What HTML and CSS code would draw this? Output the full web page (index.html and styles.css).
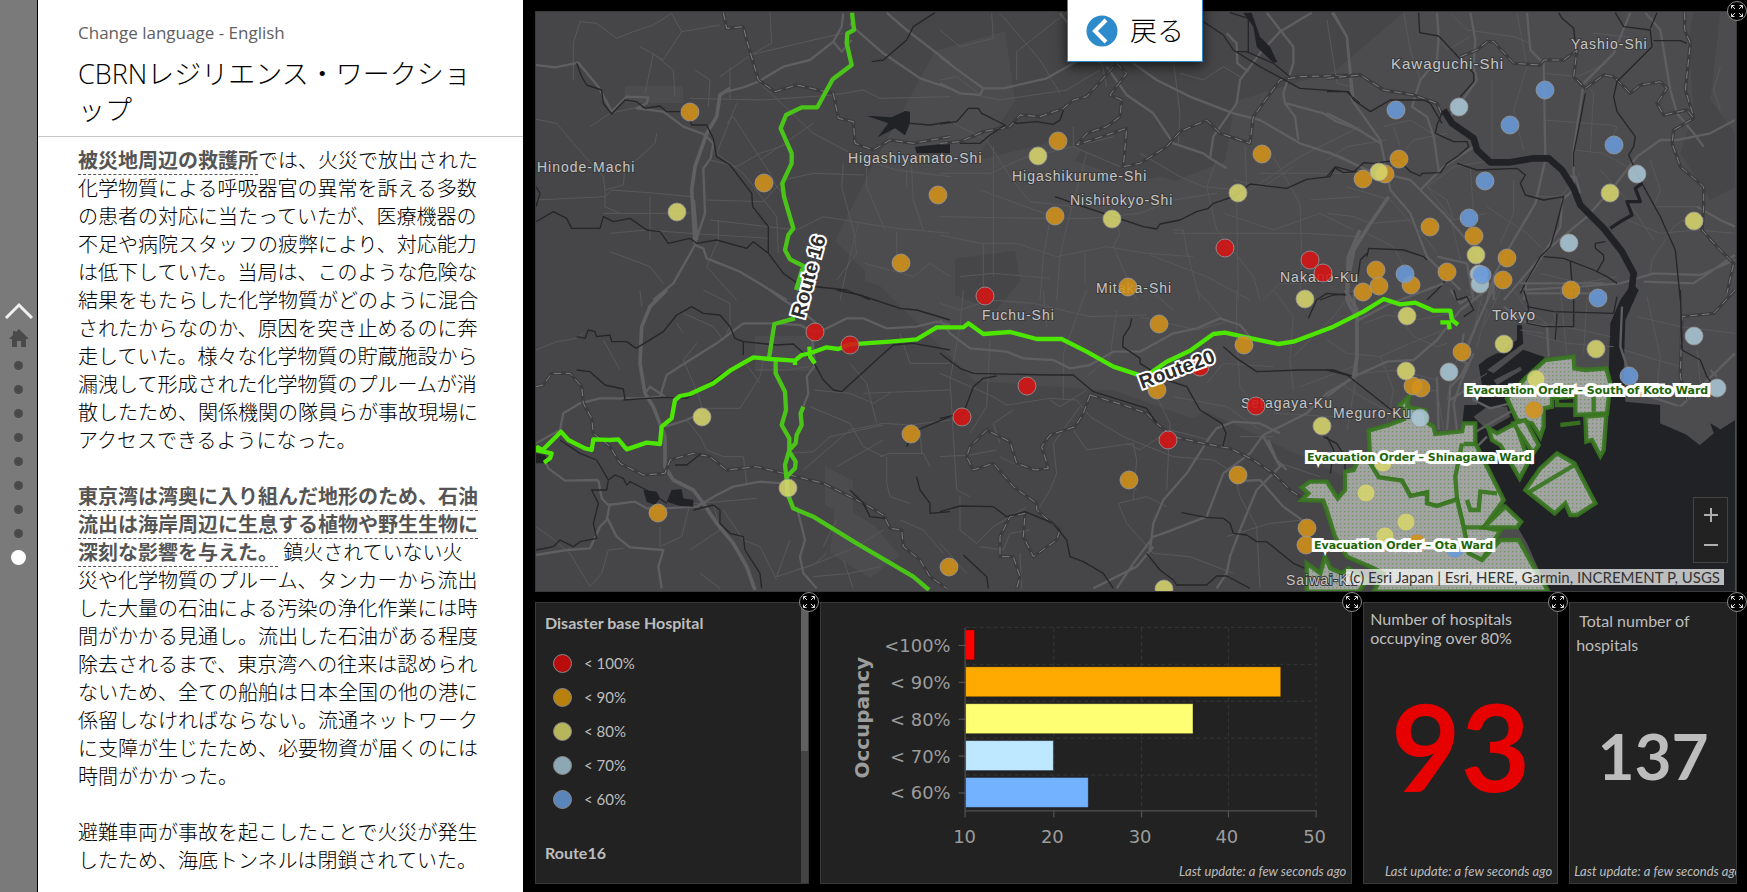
FILE: index.html
```html
<!DOCTYPE html>
<html lang="ja">
<head>
<meta charset="utf-8">
<title>CBRNレジリエンス・ワークショップ</title>
<link rel="stylesheet" href="styles.css">
</head>
<body>
<nav class="rail" aria-label="Sections">
  <button class="rail-up" aria-label="Previous section"><svg width="30" height="18" viewBox="0 0 30 18"><path d="M2 16 15 3l13 13" fill="none" stroke="#f0f0f0" stroke-width="3"/></svg></button>
  <button class="rail-home" aria-label="Home"><svg width="20" height="18" viewBox="0 0 20 18"><path d="M10 0 6.500 3.500V2H4v4L0 10h3v8h5v-6h4v6h5v-8h3z" fill="#4a4a4a"/></svg></button>
  <button class="dot" aria-label="Section 1"></button>
  <button class="dot" aria-label="Section 2"></button>
  <button class="dot" aria-label="Section 3"></button>
  <button class="dot" aria-label="Section 4"></button>
  <button class="dot" aria-label="Section 5"></button>
  <button class="dot" aria-label="Section 6"></button>
  <button class="dot" aria-label="Section 7"></button>
  <button class="dot" aria-label="Section 8"></button>
  <button class="dot active" aria-label="Section 9" aria-current="true"></button>
</nav>

<article class="story">
  <header class="story-head">
    <a class="lang" href="#en">Change language - English</a>
    <h1>CBRNレジリエンス・ワークショップ</h1>
  </header>
  <div class="story-body">
    <p><a href="#shelter">被災地周辺の救護所</a>では、火災で放出された化学物質による呼吸器官の異常を訴える多数の患者の対応に当たっていたが、医療機器の不足や病院スタッフの疲弊により、対応能力は低下していた。当局は、このような危険な結果をもたらした化学物質がどのように混合されたからなのか、原因を突き止めるのに奔走していた。様々な化学物質の貯蔵施設から漏洩して形成された化学物質のプルームが消散したため、関係機関の隊員らが事故現場にアクセスできるようになった。</p>
    <p><a href="#bay">東京湾は湾奥に入り組んだ地形のため、石油流出は海岸周辺に生息する植物や野生生物に深刻な影響を与えた。</a> 鎮火されていない火災や化学物質のプルーム、タンカーから流出した大量の石油による汚染の浄化作業には時間がかかる見通し。流出した石油がある程度除去されるまで、東京湾への往来は認められないため、全ての船舶は日本全国の他の港に係留しなければならない。流通ネットワークに支障が生じたため、必要物資が届くのには時間がかかった。</p>
    <p>避難車両が事故を起こしたことで火災が発生したため、海底トンネルは閉鎖されていた。</p>
  </div>
</article>

<main class="dashboard">
  <button class="back"><svg width="32" height="32" viewBox="0 0 32 32"><circle cx="16" cy="16" r="15.500" fill="#2d8bcb"/><path d="M20 5 9 16l11 11" fill="none" stroke="#fff" stroke-width="4"/></svg><span>戻る</span></button>

  <section class="panel map" aria-label="Map">
    <svg class="canvas" viewBox="1 1 1200 579" preserveAspectRatio="xMidYMid slice">
      <defs>
        <pattern id="hatch" width="12" height="12" patternUnits="userSpaceOnUse"><rect width="12" height="12" fill="#a3a3a4"/><rect x="3" y="3" width="4" height="4" fill="#6f9364"/></pattern>
      </defs>
      <rect width="1201" height="580" fill="#464648"/>
      <path class="urban" d="M400 40 470 20 480 90 440 150 520 130 640 170 690 150 700 90 800 60 870 0H1201V580H900L830 540 720 430 580 380 440 370 380 310 300 230 340 150z"/>
      <path class="rural" d="M540 150 590 60 640 100 690 80 660 160 600 170zM402 250 480 240 485 270 460 300 410 280zM670 400 840 480 880 540 830 580H560L560 470z"/>
      <path class="urban" d="M90 75H148V92H90zM328 225 420 230 420 300 330 270zM220 325h60v35h-60zM290 455l28 15v35l-28-10zM300 490l40 25 25 30-30 22-40-25z"/>

      <g transform="translate(-5 -11) scale(.333333)">
        <path class="minor" d="M130 240V130L150 65 200 70 260 115 310 95 370 75 425 40 455 95 570 75M455 95 400 180 370 162 330 140M370 162 345 280M370 162 430 210 435 290M660 165 850 120 940 100M570 230 670 160 725 130 720 35M690 250 850 400 1000 480 1100 510 1260 530M18 358 80 370 130 430 220 530 225 570 280 555 284 510 320 480 375 430 380 400M180 380 240 340 330 320M480 295 700 300 910 285 1000 270 1050 295 1260 290M600 200V300M495 210 540 240 535 320M590 370 610 350 720 520 740 560 780 600M530 600 700 605 760 540 850 520 1000 525M540 660 800 690 880 650 1000 670 1100 685 1260 700M18 600 225 590 245 570 380 580 480 590M220 640H480M240 700 350 690 480 700 720 715M225 570V620L270 640M360 590V720M540 480 620 500 690 460 780 430M620 310 560 460 640 520 740 650 745 760M940 490 935 560 970 690 980 760 920 840M1010 480V560L1065 690M1130 510V560M1145 500 1150 600 1180 690M1100 695V800M565 660V720L530 800 620 900M1005 790 1150 830 1200 790 1260 830M240 755 360 800 400 850M985 670 945 830 930 900M690 480 850 370"/>
        <path class="major" d="M18 195 75 202 145 188 205 260 245 335 290 290 355 292 350 310 320 325 400 335 460 380 520 402 550 430 542 475 520 505 525 640 495 730M370 900 430 850 495 735 520 745 530 775 630 815 770 900M570 280 640 262 685 245 760 200 840 180 910 125 935 80 940 40M910 125 935 155 965 120M1070 38 1130 90 1260 190M960 70 985 95 1060 160 1170 235 1260 265"/>
        <path class="mega" d="M495 730 485 570 495 500 530 400 560 350 570 285 600 265M490 600 500 720"/>
        <path class="border" d="M580 38 590 85 640 80 650 120 685 240 735 275 800 255 910 280 925 355 970 365 975 430 1030 450 1080 420 1150 430 1260 410"/>
        <path class="border-dash" d="M580 38 590 85 640 80 650 120 685 240 735 275 800 255 910 280 925 355 970 365 975 430 1030 450 1080 420 1150 430 1260 410"/>
        <path class="rail-line" d="M140 190 155 230 170 255 215 270 220 310 245 342 285 300 320 305 345 325 390 318 410 335 470 335 485 375 530 375 550 415 560 470 600 495 665 580 668 620 715 680 715 760 760 820 810 855 950 870 1020 900M18 665 70 635 110 655 125 685 210 685 220 650 250 665 300 655 350 690 390 695 415 730 480 715 500 730 560 720 650 745 670 725 715 760M1140 370 1200 375 1260 365M1025 185 1060 180 1130 120 1150 80 1215 38M18 620 30 580 18 560"/>
        <path class="water" d="M1010 347 1085 352 1125 333 1140 335 1140 370 1125 406 1095 385 1043 412 1075 370zM1155 440 1260 430V460H1160z"/>
      </g>
      <g transform="translate(405 -11) scale(.333333)">
        <path class="minor" d="M0 90 60 140 160 115 155 40M0 240 50 230 130 290 180 300 380 270 480 210M230 240V155L350 60 380 40M180 40 300 180 360 280M0 520 150 520 250 475 400 440 540 500M0 650 300 655 450 655 600 640 700 600 830 580M400 380V440L520 410M700 180 720 340 715 430M720 220 790 240 850 200 900 230M460 60 500 260M600 460 720 530 790 560 900 570M830 480 800 560 830 690 940 830 960 900M915 440 920 560 890 600 895 900M0 705 120 730 230 730 350 770 500 740 620 760 760 770M130 730V900M60 830 160 820 330 835M300 900 310 770 330 660M350 900 360 770 380 680 440 460M435 760V850M520 640 540 700 520 740 590 900M700 690 730 690 740 750 780 900M630 765 800 830 930 900M1000 470 1080 610 1085 760 1080 900M1240 690 1140 640 1000 690 850 640M930 570 1080 470 1260 380M960 520 1260 520M700 700 1100 700 1260 710M160 440V830M40 370 140 420 210 530 270 605 400 620M120 570 340 650M970 900 1020 850 1110 850M1110 600 1260 590M880 540 970 560 1060 500"/>
        <path class="major" d="M0 170 60 215 130 265 190 265 320 235 400 190 480 150M0 250 60 280 120 285 130 265M580 190 650 240 750 290 880 340 960 360 1080 430 1200 470 1260 500M500 200 560 285 640 340 700 430 790 460 810 475 860 505M810 475 820 410 890 310 900 240 960 160 1020 95 1115 38M980 38 1060 140 1060 190 1030 280 1035 310 1065 350 1075 420M1180 38 1220 110 1240 290 1260 310M360 40 480 190M860 100 890 130 892 190 925 215M1040 310 1150 340 1190 365 1260 390"/>
        <path class="mega" d="M1260 690 1225 770 1220 900"/>
        <path class="border" d="M0 430 60 425 130 395 210 380 240 345 300 350 370 325 400 300 440 290 530 190 560 220 510 285 545 300 540 350 500 380 440 400 410 435 560 385 550 500 600 490 680 440 720 395 800 360 840 400 930 430 940 350 1020 240 1080 230 1260 225"/>
        <path class="border-dash" d="M0 430 60 425 130 395 210 380 240 345 300 350 370 325 400 300 440 290 530 190 560 220 510 285 545 300 540 350 500 380 440 400 410 435 560 385 550 500 600 490 680 440 720 395 800 360 840 400 930 430 940 350 1020 240 1080 230 1260 225"/>
        <path class="rail-line" d="M0 372 50 365 85 325 115 325 125 340 195 375 150 405 120 430 60 430M220 365 230 370 290 365 340 373 360 360 370 330M345 590 430 620 520 650 610 680 650 687 660 672 720 660 770 635 805 625 820 610 880 590 930 552 1040 565 1100 538 1170 530 1185 503 1210 518 1260 515M790 65 850 105 880 150 960 200 1080 265 1220 275 1260 310M870 38 925 55 925 160M890 155 920 155 1000 190 1050 230M1140 900 1180 885 1240 880"/>
        <path class="water" d="M910 38 935 38 960 110 990 140 1012 186 1000 188 950 140 940 80z"/>
      </g>
      <g transform="translate(792 -11) scale(.333333)">
        <path class="rural" d="M1100 38H1180L1150 300 1224 400V560L1150 600 1060 460 1100 340 1085 120z"/>
        <path class="minor" d="M0 60 30 250 70 260M230 38 250 150 280 240M370 38 420 90 560 110 610 130M430 110 360 150 340 120M495 240V470M570 38 600 200 560 330 590 450M650 220 750 230 840 190M650 360 850 375 870 380 850 430M500 480 380 500 300 560 360 600 380 660 480 640M740 450 830 460 900 500M770 240 800 280 790 450M800 100 900 110 960 140M1180 200 1160 270 1180 330M1100 640 1040 680 975 780 970 820M170 380 250 360 330 410M180 520 260 420 360 400M200 380 220 440M0 480 60 440 180 420M0 640 80 650 130 670 250 660M60 560 190 600 300 720 330 760M120 700 200 740 240 820 250 900M300 560 370 650 400 780M430 500 440 650 460 760 450 900M620 590 700 590 760 520M540 760 500 900M640 820 760 850 870 830M770 840 800 900M820 510 900 600 980 720M900 660 1000 700 1110 690 1224 700M970 480 1000 570 980 620 1110 620M480 620 600 700 650 750M560 540V640L520 730"/>
        <path class="major" d="M15 38 60 110 75 300 160 420 190 570 250 640 300 770 400 870M330 38 335 110 330 180 280 240 255 320 300 350 320 410 335 510M430 38 445 120 440 200 450 240 400 310 370 350M600 38 610 150 650 190 655 470M655 480 625 610 560 720 500 830 480 900M0 340 80 380 160 430M0 455 120 510 250 540 350 640 470 780M790 230 860 160 910 38M790 230 770 250 750 380 740 450 740 560M955 38 1000 90 1030 270 1050 340 1100 400 1130 440M1224 360 1150 400 1050 420 1000 420 930 470 860 560 780 650 660 750 530 900M1110 620 1180 660 1224 680M1224 780 1120 825 980 820 880 850 760 860 580 870M1224 765 1100 850 950 845M280 570 350 500 440 440M720 530 745 530 760 580M745 565 705 600 700 680 650 760 600 840 590 900M500 840V900M330 770 420 790 440 900"/>
        <path class="mega" d="M185 590 130 670 80 750 65 830 60 900"/>
        <path class="border" d="M0 235 100 225 170 270 260 285 330 310 345 345M400 170 450 150 480 125 500 125 560 190 640 195 650 180 710 180 750 150 740 230 775 265 830 225 860 230 910 280 940 255 1000 245 1020 265 990 310 1010 345 1080 330 1100 355 1040 390 1035 430 1060 500 1130 560 1130 620 1125 690 1170 740 1220 790 1200 880M1073 38V90L1090 130 1075 270 1100 350"/>
        <path class="border-dash" d="M0 235 100 225 170 270 260 285 330 310 345 345M400 170 450 150 480 125 500 125 560 190 640 195 650 180 710 180 750 150 740 230 775 265 830 225 860 230 910 280 940 255 1000 245 1020 265 990 310 1010 345 1080 330 1100 355 1040 390 1035 430 1060 500 1130 560 1130 620 1125 690 1170 740 1220 790 1200 880M1073 38V90L1090 130 1075 270 1100 350"/>
        <path class="river" d="M350 330 375 370 440 415 450 450 490 487 550 487 620 475 665 475 705 510 740 565 760 615 830 685 885 755 920 820 910 900"/>
        <path class="rail-line" d="M275 38 278 98 335 108 440 220 440 245 400 290M695 38 705 55 740 85 745 130M865 38 890 80 970 90 975 140 870 245 860 290 870 335 925 410 920 440 905 465 925 510 950 560 1000 650 1045 750 1060 900M980 122H1060L1080 130M990 38 970 85M0 275 65 275 80 300 130 335 190 300 290 300 310 310 345 370M325 400 330 375 345 340M325 400 380 425 420 425 425 440 390 470 360 490 340 518 285 520 280 528 250 515 215 480 140 490 110 488 80 515 25 500 0 530M390 490 450 510 570 505 595 525 580 550 595 585 650 600 710 590 700 630 685 690 670 740 640 770 600 840 580 880M120 770 125 745 230 750 290 770 300 780M90 850 100 780 120 760M650 770 710 775 800 810 840 830 870 850M730 785 735 850M835 725 805 730 805 745 830 765 830 780 810 815M775 280 760 360 740 460 740 500M300 900 350 850 355 830"/>
        <path class="creek" d="M945 550 925 565 940 605 900 605 915 645 880 665 850 685"/>
      </g>
      <g transform="translate(-5 279) scale(.333333)">
        <path class="minor" d="M330 0 335 50M440 100 460 130M460 70 550 110 580 150 600 110M18 180 80 155 140 145 160 130M520 0 600 40 600 130M500 160 460 210 490 280 510 330 515 355 630 355 690 260 700 210M470 390 510 440 530 480 580 500 640 500 650 580M820 540 960 420 1060 400 1142 405 1260 390M780 490 850 485 900 440 1060 405M840 350 960 400 1000 470 1060 500M1050 500 1080 490 1180 490 1200 530M1070 500V580L1080 620 1140 640M920 530 1060 450M1000 310 1260 300M850 300 960 310 1030 340 1080 310M960 220 1010 280 1040 400M1170 410 1175 490M1110 130 1140 220 1260 220M18 710 60 740 120 790 180 890 215 850 235 780 280 775M390 710 390 770 455 740 480 640 520 660M455 640 510 640 680 625M580 660 640 750 690 770 740 870M550 640 570 720 480 780M780 750 740 860 800 840 850 825 890 790M800 840 860 820 980 770 1060 720M920 690 880 770M940 810 970 895M850 860 960 850 1050 830M510 850 570 895M1110 690 1180 720 1240 790M680 240 770 240 840 230M640 210 690 280M220 150 270 240"/>
        <path class="major" d="M345 310 360 290 405 320M18 460 90 420 100 370 150 340 210 325 340 325 390 320 410 255 480 210 560 160 640 100 720 100M720 100 810 105 850 125 880 120 950 85 1000 85 1070 115 1160 110 1220 95 1260 105M205 570 105 572 55 535 45 510M205 570 215 625 235 645 315 635 350 655 400 655 500 650 560 615 610 590 690 575 760 580M18 795 110 780 180 775 210 710 230 690 240 640M230 680 260 740 300 772 400 780 385 830 395 895M800 650 825 750 810 800 820 850 860 895M845 140 855 225 830 260 835 310 820 350M405 410 470 390 510 370M720 0 760 30 810 60 860 100"/>
        <path class="mega" d="M410 0 360 50 335 110 330 220 345 310 370 350 405 440 405 530 430 570 490 600 520 640 560 700 610 760 650 830 675 900"/>
        <path class="border" d="M18 290 40 285 65 250 120 250 155 290 160 340 185 385 190 430 240 470 270 520 340 555 405 550 420 510 490 490 540 500 590 540 680 530 760 550 880 580 940 610 1000 640 1060 675 1080 715 1115 720 1120 770 1170 810 1200 860 1250 895"/>
        <path class="border-dash" d="M18 290 40 285 65 250 120 250 155 290 160 340 185 385 190 430 240 470 270 520 340 555 405 550 420 510 490 490 540 500 590 540 680 530 760 550 880 580 940 610 1000 640 1060 675 1080 715 1115 720 1120 770 1170 810 1200 860 1250 895"/>
        <path class="rail-line" d="M140 140 165 145 175 120 195 125 200 140 240 135 245 155 290 155 318 175 400 125 440 75 485 50 520 70 570 75 600 110 615 145 640 155 640 195M640 155 740 165 790 162 850 215 880 270 910 300 935 305 1050 200 1090 165 1150 160 1260 180M920 0 990 15 1110 55 1160 60 1260 90M140 240 180 245 225 285 280 297 285 328M280 330 400 322 470 325 580 250M90 450 150 490 200 510 235 570 255 555 280 565 290 585 300 575 350 600 410 640M235 570 230 600 185 600 205 640 190 700 200 745 150 755 130 770 90 750 70 770 18 780M490 660 550 645 570 660 570 700 600 730 640 740 645 780 690 850 695 895M1160 560 1170 600 1200 640 1200 670 1260 665M1130 470 1150 425 1260 380M435 525 470 525 515 490M960 600 1000 640 1020 680 1065 685"/>
        <path class="water" d="M340 600 380 605 390 625 375 645 350 635zM425 600 455 598 460 625 490 630 490 650 450 648 410 635zM18 490 45 495 60 520 18 520z"/>
      </g>
      <g transform="translate(405 279) scale(.333333)">
        <path class="minor" d="M0 40 60 60 150 30 280 40 450 80 620 75M0 500 90 495 170 480M310 0 320 110M440 0 410 80 370 190 370 330M70 0 60 110 30 270 50 600 90 620M150 150 140 350 90 430M0 250 160 320 200 345 330 325 410 330 450 380 550 440 700 500 820 510 900 560M220 360 160 400 180 460M330 330 360 350 440 300M530 60 510 200 440 260M600 80 770 120 860 95M770 0 850 90M890 0 890 150 900 290 930 330M1000 0 1060 80 1050 210 1060 300M810 450 690 420 600 480 560 460M350 550 340 460 420 350M400 420 440 480 580 460 590 510 580 630M535 640 620 620 680 650M535 640 560 700 640 790 750 800 880 850M350 550 330 600 300 650M60 620V720L110 760 160 710 260 650M180 500 240 530M120 770 190 780 210 730 270 720M240 790 245 895M1060 200 1180 80 1240 0M1080 290 1240 230M800 280 850 220 1000 230M700 320 860 350 960 420M1000 370 1180 380M1020 520 1140 560M890 580 900 620 950 710 960 895M0 760 80 850M900 440 1000 440M630 0 700 60M680 600 690 400 640 300M860 740 990 700 1090 690M560 560 590 600"/>
        <path class="major" d="M0 90 30 130 90 175 200 185 250 205 340 210 390 235 450 225 520 185 600 185 700 130 770 115 840 85 900 105 930 140M530 895 580 820 640 740 670 730 800 680 850 550 930 490 970 435 1100 370 1160 310 1245 260M630 780 640 700 670 630 740 550 810 440 830 415 880 395 960 400 1020 430M970 440 1020 530 950 600 900 720 870 800 860 850 830 895M460 895 590 830 640 770M1240 0 1250 100 1250 260M880 575 960 570 1030 650 1100 700M985 450 1010 510 1040 540"/>
        <path class="mega" d="M1220 0 1225 40 1255 90M1240 895 1260 880"/>
        <path class="border" d="M450 315 550 345 620 370 650 400 700 440 790 460 870 475 940 510 1000 550 1050 600 1095 630M450 315 430 370 405 410 330 435 305 470 325 535 285 540 230 520 210 455 140 420 90 470 80 500 100 540 160 520 220 590 290 640 290 660 360 720 350 750 280 800 250 740 255 670 210 680 180 740 180 800 220 800 240 860 230 895"/>
        <path class="border-dash" d="M450 315 550 345 620 370 650 400 700 440 790 460 870 475 940 510 1000 550 1050 600 1095 630M450 315 430 370 405 410 330 435 305 470 325 535 285 540 230 520 210 455 140 420 90 470 80 500 100 540 160 520 220 590 290 640 290 660 360 720 350 750 280 800 250 740 255 670 210 680 180 740 180 800 220 800 240 860 230 895"/>
        <path class="rail-line" d="M0 190 60 235 100 250 330 255 400 255 460 305 620 355 650 400M0 385 70 370 100 290 130 265 170 258M575 85 570 110 550 140 548 170 600 205 600 220 640 245 680 270 740 290 780 360 845 400 858 430 848 470M850 170 890 205 950 245 1080 240 1180 240 1240 260M0 665 60 648 160 650 200 680 255 665 340 700 380 750 390 800 430 815 490 850 520 895M725 668 800 682 850 685 870 700 880 730 920 735 950 755 980 755 1060 820 1095 835M620 790 660 840 700 870 710 885 800 885 830 858 860 858 930 895M70 795 140 860 145 895M1105 85 1130 30 1160 10 1220 15M1150 440 1190 460 1215 500V540"/>
      </g>
      <g transform="translate(792 279) scale(.333333)">
        <path class="water" d="M400 460 412 345 450 345 465 285 455 225 480 205 520 185 570 150 570 105 585 105 590 180 650 200 700 250 845 245 850 100 880 30 915 -20 935 0 895 90 890 240 895 335 1000 345 1000 400 1075 432 1118 465 1160 430 1150 400 1180 418 1224 390V905H665L600 760 530 640 450 480z"/>
        <path class="land" d="M440 380 480 350 540 350 550 380 480 420zM480 240 590 160 600 170 500 250zM500 270 580 230 585 240 510 285zM510 190 530 170 535 190z"/>
        <path class="minor" d="M110 100 180 75 270 90 370 70M200 60 260 140 330 170 360 160M0 150 60 190 160 200 250 160 350 120M420 0 480 60 450 170M470 0 440 120 380 230 360 330M520 0 470 110M560 0 600 60 660 100M650 100 760 120 850 140M680 60 690 150M930 80 1060 110 1224 130M960 20 1000 200 990 300M890 180 990 210 1060 230M780 20 770 190M700 0 720 200M100 250 210 240 330 270M270 310 330 300 350 420M160 200 200 300 180 400M40 280 120 330 200 370M90 250 60 420M600 130 720 160 860 170M1110 180 1120 280 1100 330M580 120 650 130M400 300 480 250"/>
        <path class="major" d="M95 90 180 45 350 -20M80 260 180 215 260 210 330 150 400 60 480 0M80 260 0 320M410 130 400 210 420 220 400 260 370 290 360 420M440 190 400 280 380 340 390 420M330 260 335 420M500 -10 450 100 410 200M530 50 600 100 660 110 665 200M885 50 880 170 900 230 940 310 1060 350 1224 190M370 0 400 40 430 20M370 330 430 290 440 330 490 355 550 340M580 -20 830 -20M420 440 560 360M420 500 480 440M600 10 840 10M1150 240 1200 290"/>
        <path class="mega" d="M55 0 90 60 90 200 80 260"/>
        <path class="border" d="M1224 0 1160 70 1065 80 1060 260 1080 330"/><path class="border-dash" d="M1224 0 1160 70 1065 80 1060 260 1080 330"/>
        <path class="rail-line" d="M0 240 60 255 130 310 200 365M380 0 390 30 420 20 440 60 410 80M590 0 605 50 600 100 650 110 740 110 740 0M600 50 680 65 860 70 870 20M690 70 685 150M1060 0 1065 180 1120 210 1140 260 1170 300M0 440 20 480 10 550"/>
        <path class="land" d="M1000 345 1070 350 1150 280 1200 230 1224 210V390L1180 418 1150 395 1130 400 1160 430 1118 465 1095 415 1075 432 1000 400z"/>
        <g class="evac">
          <path d="M125 422 185 405 232 387 232 362 218 345 245 322 240 350 295 362 300 398 320 410 325 432 405 424 410 400 445 400 445 460 485 540 530 630 470 712 520 722 465 810 425 790 410 712 390 628 330 648 300 640 300 607 250 618 225 572 155 562 130 520z"/>
          <path d="M99 500 130 520 155 562 225 572 250 618 300 607 300 640 330 648 390 628 410 712 425 790 465 810 520 750 575 750 620 830 665 905H140L170 850 140 835 60 800 24 740-1 660-11 632-76 630-56 610-76 592-51 575-1 575 32 625 54 600V545L80 540z"/>
          <path d="M-61 905V820L-20 850-6 800 10 835 44 850 65 835 120 870 95 905z"/>
          <path d="M470 712 535 650 582 695 570 712z"/>
          <path d="M540 325 595 265 655 210 740 200 742 235 775 240 838 235 850 280 840 370 745 375 745 320 675 325 675 350 650 355 650 410 640 440 615 400 570 390z"/>
          <path d="M775 380 838 375 830 480 820 498 795 450 778 455z"/>
          <path d="M485 415 510 430 565 400 605 515 578 565 520 465 495 450z"/>
          <path d="M560 400 595 390 635 465 618 490z"/>
          <path d="M595 600 640 535 690 490 742 520 805 640 750 675 730 675 715 640 683 670z"/>
          <path d="M700 405 760 398" fill="none"/>
          <path d="M600 610 742 525M405 460 385 560 390 628M420 630 430 660 455 660 460 605 510 610M410 712H475M690 325V345L745 345M800 320V365M410 462H445" fill="none"/>
        </g>
      </g>

      <g transform="translate(-5 -11) scale(.333333)" class="r16">
        <path d="M966 38 972 90 952 100 950 130 965 195 908 238 862 322 815 322 768 345 752 385 785 460 785 490 757 550 762 590 790 685 775 705 765 750 780 778 820 798 798 870"/>
        <path transform="translate(0 870)" d="M795 85 733 102 717 205M737 210 737 250 765 305 768 360 755 405 778 445 778 485 797 515 795 535 770 560 772 610 790 655 850 680 980 760 1150 860 1197 900M820 350 812 370 815 405 800 435 797 460 778 480 765 525 770 570"/>
      </g>
      <g transform="translate(-5 279) scale(.333333)" class="r20">
        <path d="M18 470 38 480 93 425 115 450 165 475 185 480 190 448 240 450 265 448 290 478 350 458 390 462 395 410 425 385 435 330 450 318 480 312 550 280 600 242 670 202 720 207 795 212 815 195 840 190 890 172 925 177 960 163 1080 155 1160 148 1220 112 1300 112 1315 100 1360 132 1440 126 1520 147 1595 147 1670 185 1750 230 1830 256 1860 250 1910 215 1980 182 2050 132 2085 128 2150 142 2245 162 2290 155 2410 110 2500 65 2561 27 2611 43 2656 38 2711 62 2761 62 2766 90 2784 104M2731 97 2756 97 2759 118M18 480 65 490 60 505 42 518M838 170 840 200 855 220M795 225V212"/>
      </g>

      <g class="city">
        <text x="2" y="161">Hinode-Machi</text>
        <text x="313" y="152">Higashiyamato-Shi</text>
        <text x="477" y="170">Higashikurume-Shi</text>
        <text x="535" y="194">Nishitokyo-Shi</text>
        <text x="561" y="282">Mitaka-Shi</text>
        <text x="745" y="271">Nakano-Ku</text>
        <text x="447" y="309">Fuchu-Shi</text>
        <text x="706" y="397">Setagaya-Ku</text>
        <text x="798" y="407">Meguro-Ku</text>
        <text x="751" y="574">Saiwai-Ku</text>
        <text x="1036" y="38">Yashio-Shi</text>
        <text class="big" x="856" y="58">Kawaguchi-Shi</text>
        <text class="big" x="957" y="309">Tokyo</text>
      </g>
      <g id="hospitals"></g>
      <g class="route-name">
        <text transform="translate(269 308) rotate(-75)">Route 16</text>
        <text transform="translate(607 378) rotate(-20)">Route20</text>
      </g>
      <g class="evac-name">
        <text x="931" y="383">Evacuation Order – South of Koto Ward</text>
        <text x="772" y="450">Evacuation Order – Shinagawa Ward</text>
        <text x="779" y="538">Evacuation Order – Ota Ward</text>
      </g>
    </svg>
    <div class="zoom"><button aria-label="Zoom in"><svg width="16" height="16" viewBox="0 0 16 16"><path d="M1 8h14M8 1v14"/></svg></button><button aria-label="Zoom out"><svg width="16" height="16" viewBox="0 0 16 16"><path d="M1 8h14"/></svg></button></div>
    <p class="credit">(c) Esri Japan | Esri, HERE, Garmin, INCREMENT P, USGS</p>
    <button class="expand" aria-label="Expand"><svg viewBox="0 0 20 20"><use href="#arrows"/></svg></button>
  </section>

  <div class="row">
    <section class="panel legend">
      <div class="legend-scroll">
        <h2>Disaster base Hospital</h2>
        <ul>
          <li><i class="key red"></i>&lt; 100%</li>
          <li><i class="key orange"></i>&lt; 90%</li>
          <li><i class="key yellow"></i>&lt; 80%</li>
          <li><i class="key pale"></i>&lt; 70%</li>
          <li><i class="key blue"></i>&lt; 60%</li>
        </ul>
        <h2>Route16</h2>
      </div>
      <div class="track"><div class="thumb"></div></div>
      <button class="expand" aria-label="Expand"><svg viewBox="0 0 20 20"><use href="#arrows"/></svg></button>
    </section>

    <section class="panel chart">
      <svg viewBox="0 0 532 250" role="img" aria-label="Occupancy chart">
        <path class="grid" d="M145 24.500H496M145 61.500H496M145 98.500H496M145 135.500H496M145 172.500H496M233.500 25V209M321.500 25V209M408.500 25V209M496.500 25V209"/>
        <g class="bars">
          <rect x="145" y="27" width="9" height="30" fill="#f00"/>
          <rect x="145" y="64" width="316" height="30" fill="#fa0"/>
          <rect x="145" y="101" width="228" height="30" fill="#ffff73"/>
          <rect x="145" y="138" width="88" height="30" fill="#bee8ff"/>
          <rect x="145" y="175" width="123" height="30" fill="#73b2ff"/>
        </g>
        <path class="axis" d="M144.500 25V215M145 208.500H497M138 42.500h7M138 79.500h7M138 116.500h7M138 153.500h7M138 190.500h7M233.500 209v6M321.500 209v6M408.500 209v6M496.500 209v6"/>
        <g class="ylab"><text x="130" y="49">&lt;100%</text><text x="130" y="86">&lt; 90%</text><text x="130" y="123">&lt; 80%</text><text x="130" y="160">&lt; 70%</text><text x="130" y="197">&lt; 60%</text></g>
        <g class="xlab"><text x="144" y="241">10</text><text x="232" y="241">20</text><text x="320" y="241">30</text><text x="407" y="241">40</text><text x="495" y="241">50</text></g>
        <text class="ytitle" transform="translate(48 115) rotate(-90)">Occupancy</text>
      </svg>
      <p class="updated">Last update: a few seconds ago</p>
      <button class="expand" aria-label="Expand"><svg viewBox="0 0 20 20"><use href="#arrows"/></svg></button>
    </section>

    <section class="panel stat over">
      <h2>Number of hospitals occupying over 80%</h2>
      <p class="value">93</p>
      <p class="updated">Last update: a few seconds ago</p>
      <button class="expand" aria-label="Expand"><svg viewBox="0 0 20 20"><use href="#arrows"/></svg></button>
    </section>

    <section class="panel stat total">
      <h2>Total number of hospitals</h2>
      <p class="value">137</p>
      <p class="updated">Last update: a few seconds ago</p>
      <button class="expand" aria-label="Expand"><svg viewBox="0 0 20 20"><use href="#arrows"/></svg></button>
    </section>
  </div>
</main>

<svg class="defs" width="0" height="0" aria-hidden="true"><symbol id="arrows" viewBox="0 0 20 20"><circle cx="10" cy="10" r="9.500" fill="#000" stroke="#8c8c8c"/><path d="M4.500 7.500v-3h3M4.500 4.500 8 8M12.500 4.500h3v3M15.500 4.500 12 8M4.500 12.500v3h3M4.500 15.500 8 12M12.500 15.500h3v-3M15.500 15.500 12 12" fill="none" stroke="#ddd"/></symbol></svg>
<script src="map.js"></script>
</body>
</html>
```
FILE: styles.css
```css
* { box-sizing: border-box; }
body { margin: 0; display: flex; height: 100vh; overflow: hidden; background: #000; font-family: Lato, "Noto Sans CJK JP", sans-serif; }
button { margin: 0; padding: 0; border: 0; background: none; font: inherit; color: inherit; cursor: pointer; }
h1, h2, p, ul { margin: 0; padding: 0; font-weight: inherit; }
.defs { position: absolute; }

.rail { flex: none; width: 38px; padding-top: 299px; border-right: 1px solid #000; background: #7a7a7a; display: flex; flex-direction: column; align-items: center; }
.rail button { display: flex; align-items: center; justify-content: center; flex: none; width: 100%; height: 24px; }
.rail .rail-up { height: 24px; }
.rail .rail-home { height: 30px; }
.dot::before { content: ""; width: 9px; height: 9px; border-radius: 50%; background: #4a4a4a; }
.dot.active::before { width: 15px; height: 15px; background: #fff; }

.story { flex: none; width: 485px; background: #fff; color: #000; font-family: "Open Sans", "Noto Sans CJK JP", sans-serif; font-weight: 300; }
.story-head { padding: 22px 40px 8px; border-bottom: 1px solid #c8c8c8; }
.lang { display: block; color: #606060; font-size: 17px; font-weight: 400; line-height: 22px; text-decoration: none; }
.story h1 { margin-top: 12px; font-size: 27px; line-height: 36px; }
.story-body { padding: 10px 40px; font-size: 20px; line-height: 28px; line-break: strict; word-break: break-all; }
.story-body p { max-width: 404px; margin-bottom: 28px; }
.story-body a { color: #555; font-weight: 700; text-decoration: none; border-bottom: 1px dashed #555; }

.dashboard { position: relative; flex: 1; min-width: 0; padding: 11px 10px 8px 12px; display: flex; flex-direction: column; gap: 10px; }
.back { position: absolute; z-index: 2; top: 0; left: 50%; transform: translateX(-50%); display: flex; align-items: center; gap: 12px; height: 62px; padding: 0 18px; border: 1px solid #2d86c6; border-top: 0; background: #fff; color: #000; font-size: 27px; font-weight: 300; line-height: 36px; box-shadow: 0 4px 12px rgba(0, 0, 0, .7); }

.panel { position: relative; min-width: 0; border: 1px solid #3a3a3a; background: #222; color: #bdbdbd; }
.expand { position: absolute; z-index: 1; top: -11px; right: -11px; width: 20px; height: 20px; }
.expand svg { display: block; width: 20px; height: 20px; }

.map { flex: 1; min-height: 0; }
.canvas { display: block; width: 100%; height: 100%; }
.canvas path { fill: none; stroke-linejoin: round; }
.canvas .urban { fill: #4c4c4e; }
.canvas .rural { fill: #464648; }
.canvas .water { fill: #212226; }
.canvas .land { fill: #4c4c4e; }
.minor { stroke: #58585a; stroke-width: 3; }
.major { stroke: #5f5f61; stroke-width: 7; }
.mega { stroke: #606062; stroke-width: 11; }
.border { stroke: #3c3c3e; stroke-width: 10; }
.border-dash { stroke: #7c7c7e; stroke-width: 3; stroke-dasharray: 22 14; }
.rail-line { stroke: #262629; stroke-width: 4; }
.river { stroke: #212226; stroke-width: 20; }
.creek { stroke: #212226; stroke-width: 10; }
.canvas .evac path { fill: url(#hatch); stroke: #38761f; stroke-opacity: .92; stroke-width: 13; stroke-linejoin: miter; }
.canvas .evac path[fill="none"] { fill: none; }
.r16 path { stroke: #4bc41a; stroke-width: 13; }
.r20 path { stroke: #4ce600; stroke-width: 13; }
.city text { font-family: "Liberation Sans", Arial, sans-serif; font-size: 14px; letter-spacing: 1px; fill: #c6c6c6; stroke: #3a3a3c; stroke-width: 2px; paint-order: stroke; }
.city .big { font-size: 15px; }
.route-name text { font-family: "Liberation Sans", Arial, sans-serif; font-size: 20px; font-weight: 700; fill: #2c2c2c; stroke: #fff; stroke-width: 4px; paint-order: stroke; }
.evac-name text { font-family: "DejaVu Sans", Verdana, sans-serif; font-size: 11px; font-weight: 700; fill: #1d6608; stroke: #fff; stroke-width: 6px; paint-order: stroke; }
.hospital { stroke: #999; stroke-width: 1; fill-opacity: .88; stroke-opacity: .8; }
.hospital.red { fill: #d81313; }
.hospital.orange { fill: #d3921a; }
.hospital.yellow { fill: #d6d56c; }
.hospital.pale { fill: #a8c6d5; }
.hospital.blue { fill: #6a9ad9; }
.zoom { position: absolute; right: 8px; bottom: 28px; width: 35px; padding: 2px 0; border: 1px solid #444; background: #222; display: flex; flex-direction: column; }
.zoom button { display: flex; align-items: center; justify-content: center; height: 30px; }
.zoom path { stroke: #b0b0b0; stroke-width: 2; }
.credit { position: absolute; right: 12px; bottom: 6px; padding: 0 4px; background: rgba(255, 255, 255, .7); color: #333; font-size: 15px; line-height: 16px; }

.row { flex: none; height: 282px; display: grid; grid-template-columns: 274fr 533fr 195fr 168fr; gap: 11px; }
.legend { display: flex; }
.legend-scroll { flex: 1; overflow: hidden; padding: 9px 9px 0; font-size: 15px; }
.legend h2 { font-size: 16px; font-weight: 700; line-height: 22px; }
.legend ul { list-style: none; padding: 12px 8px 26px; }
.legend li { display: flex; align-items: center; gap: 12px; height: 34px; }
.key { width: 19px; height: 19px; border: 1px solid #888; border-radius: 50%; }
.key.red { background: #b90d0d; }
.key.orange { background: #b8800c; }
.key.yellow { background: #b8b65a; }
.key.pale { background: #8ca8b5; }
.key.blue { background: #5a85ba; }
.track { width: 7px; background: #444; }
.thumb { height: 53%; background: #606060; }

.chart svg:first-child { display: block; width: 100%; }
.chart text { font-family: "DejaVu Sans", Verdana, sans-serif; font-size: 18px; fill: #9c9c9c; }
.chart .ylab text { text-anchor: end; }
.chart .xlab text { text-anchor: middle; }
.chart .ytitle { font-size: 20px; font-weight: 700; text-anchor: middle; }
.grid { stroke: #363636; stroke-dasharray: 4 3; fill: none; }
.axis { stroke: #5c5c5c; fill: none; }
.bars rect { stroke: #000; stroke-opacity: .3; }
.updated { position: absolute; left: 4px; right: 5px; bottom: 4px; overflow: hidden; white-space: nowrap; text-align: right; font-size: 13px; font-style: italic; line-height: 16px; }

.stat { display: flex; flex-direction: column; padding: 6px 6px 0; }
.stat h2 { font-size: 16px; line-height: 19px; }
.value { flex: 1; display: flex; align-items: center; justify-content: center; font-weight: 700; line-height: 1; }
.over .value { padding-bottom: 38px; font-size: 120px; color: #e60000; }
.total h2 { line-height: 24px; text-indent: 3px; }
.total .value { padding-bottom: 28px; font-size: 64px; }
.total .updated { right: 0; text-align: left; }
```
FILE: map.js
```js
// Hospital positions by occupancy class, in map units.
const hospitals = {
  pale: [[924,96],[1102,163],[1034,232],[944,263],[945,273],[914,361],[885,407],[1159,325],[1182,377]],
  orange: [[155,101],[229,172],[403,184],[366,252],[523,130],[520,205],[727,143],[593,276],[864,148],[850,163],[828,168],[895,216],[939,225],[972,247],[968,269],[841,259],[844,275],[828,281],[876,274],[912,261],[1036,279],[376,423],[123,502],[414,556],[624,313],[709,334],[622,379],[594,469],[703,464],[772,517],[771,534],[927,341],[886,377],[878,375],[999,399],[882,532]],
  yellow: [[142,201],[503,145],[577,208],[703,182],[770,288],[844,161],[1075,182],[1159,210],[941,244],[167,406],[253,477],[787,415],[629,578],[872,305],[969,333],[871,360],[1061,338],[1001,368],[831,482],[871,511],[850,525],[848,452]],
  blue: [[861,99],[1010,79],[975,114],[1079,134],[950,170],[934,207],[870,263],[947,264],[1063,287],[1094,365],[920,538]],
  red: [[690,237],[775,249],[788,262],[450,285],[280,321],[315,334],[492,375],[427,406],[665,356],[721,395],[633,429]]
};
const layer = document.getElementById("hospitals");
for (const [level, points] of Object.entries(hospitals)) {
  for (const [x, y] of points) {
    const dot = document.createElementNS("http://www.w3.org/2000/svg", "circle");
    dot.setAttribute("class", "hospital " + level);
    dot.setAttribute("cx", x);
    dot.setAttribute("cy", y);
    dot.setAttribute("r", 9);
    layer.append(dot);
  }
}
```
